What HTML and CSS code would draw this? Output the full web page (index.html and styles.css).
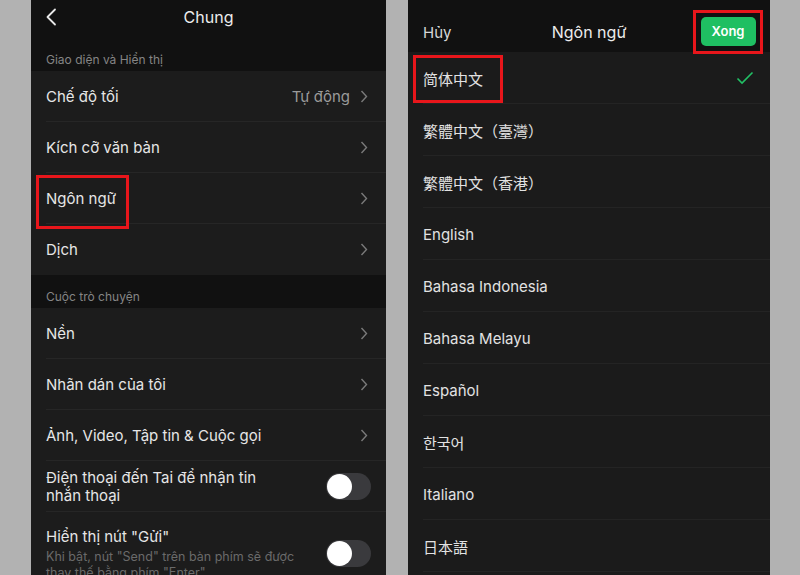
FILE: index.html
```html
<!DOCTYPE html>
<html lang="vi">
<head>
<meta charset="utf-8">
<link rel="stylesheet" href="styles.css">
</head>
<body>
<div class="stage">
  <section class="phone left">
    <header class="nav">
      <svg class="back" width="12" height="18" viewBox="0 0 12 18"><polyline points="10,1.5 2.5,9 10,16.5" fill="none" stroke="#e8e8e8" stroke-width="1.8" stroke-linecap="round" stroke-linejoin="round"/></svg>
      <span class="nav-title">Chung</span>
    </header>
    <div class="group-label first">Giao diện và Hiển thị</div>
    <div class="group">
      <div class="row"><span class="label">Chế độ tối</span><span class="value">Tự động</span><svg class="chev" width="8" height="13" viewBox="0 0 8 13"><polyline points="1.5,1 6.5,6.5 1.5,12" fill="none" stroke="#7a7a7a" stroke-width="1.4"/></svg></div>
      <div class="row"><span class="label">Kích cỡ văn bản</span><svg class="chev" width="8" height="13" viewBox="0 0 8 13"><polyline points="1.5,1 6.5,6.5 1.5,12" fill="none" stroke="#7a7a7a" stroke-width="1.4"/></svg></div>
      <div class="row"><span class="label"><span class="boxed-left">Ngôn ngữ</span></span><svg class="chev" width="8" height="13" viewBox="0 0 8 13"><polyline points="1.5,1 6.5,6.5 1.5,12" fill="none" stroke="#7a7a7a" stroke-width="1.4"/></svg></div>
      <div class="row last"><span class="label">Dịch</span><svg class="chev" width="8" height="13" viewBox="0 0 8 13"><polyline points="1.5,1 6.5,6.5 1.5,12" fill="none" stroke="#7a7a7a" stroke-width="1.4"/></svg></div>
    </div>
    <div class="group-label">Cuộc trò chuyện</div>
    <div class="group">
      <div class="row"><span class="label">Nền</span><svg class="chev" width="8" height="13" viewBox="0 0 8 13"><polyline points="1.5,1 6.5,6.5 1.5,12" fill="none" stroke="#7a7a7a" stroke-width="1.4"/></svg></div>
      <div class="row"><span class="label">Nhãn dán của tôi</span><svg class="chev" width="8" height="13" viewBox="0 0 8 13"><polyline points="1.5,1 6.5,6.5 1.5,12" fill="none" stroke="#7a7a7a" stroke-width="1.4"/></svg></div>
      <div class="row"><span class="label">Ảnh, Video, Tập tin &amp; Cuộc gọi</span><svg class="chev" width="8" height="13" viewBox="0 0 8 13"><polyline points="1.5,1 6.5,6.5 1.5,12" fill="none" stroke="#7a7a7a" stroke-width="1.4"/></svg></div>
      <div class="row"><span class="label multi">Điện thoại đến Tai để nhận tin<br>nhắn thoại</span><span class="toggle"><span class="knob"></span></span></div>
      <div class="row tall2"><div class="label-block"><div class="label">Hiển thị nút "Gửi"</div><div class="sub">Khi bật, nút "Send" trên bàn phím sẽ được<br>thay thế bằng phím "Enter"</div></div><span class="toggle"><span class="knob"></span></span></div>
    </div>
  </section>

  <section class="phone right">
    <header class="nav2">
      <span class="cancel">Hủy</span>
      <span class="nav-title">Ngôn ngữ</span>
      <span class="done-wrap"><span class="done">Xong</span></span>
    </header>
    <div class="list">
      <div class="lrow"><span class="sel"><span class="boxed-right">简体中文</span></span><svg class="check" width="18" height="14" viewBox="0 0 18 14"><polyline points="1.5,7.5 6,12 16.5,1.5" fill="none" stroke="#22c065" stroke-width="1.6"/></svg></div>
      <div class="lrow">繁體中文（臺灣）</div>
      <div class="lrow">繁體中文（香港）</div>
      <div class="lrow">English</div>
      <div class="lrow">Bahasa Indonesia</div>
      <div class="lrow">Bahasa Melayu</div>
      <div class="lrow">Español</div>
      <div class="lrow">한국어</div>
      <div class="lrow">Italiano</div>
      <div class="lrow">日本語</div>
    </div>
  </section>
</div>
</body>
</html>
```
FILE: styles.css
```css
* { box-sizing: border-box; }
html, body { margin: 0; padding: 0; }
body {
  background: #b2b2b2;
  font-family: Inter, "Noto Sans CJK SC", "Noto Sans CJK KR", sans-serif;
  color: #e4e4e4;
  width: 800px;
  height: 575px;
  overflow: hidden;
}
.stage {
  display: flex;
  gap: 22px;
  padding-left: 31px;
  height: 575px;
}
.phone {
  height: 575px;
  overflow: hidden;
  background: #111111;
  flex: none;
}
.left { width: 355px; }
.right { width: 362px; background: #1b1b1b; }

.nav {
  height: 40px;
  display: flex;
  align-items: center;
  justify-content: center;
  position: relative;
}
.back { position: absolute; left: 14px; top: 8px; }
.nav-title { font-size: 16px; color: #ececec; }
.left .nav-title { margin-top: -6px; }

.group-label {
  font-size: 12px;
  color: #858585;
  padding: 14px 15px 4px;
  height: 33px;
  display: flex;
  align-items: flex-end;
}
.group-label.first { height: 31px; padding-top: 0; }
.group { background: #1c1c1c; }
.row {
  height: 51px;
  display: flex;
  align-items: center;
  margin-left: 15px;
  padding-right: 18px;
  border-bottom: 1px solid #262626;
}
.row.last { border-bottom: none; }
.label { font-size: 15px; color: #e6e6e6; flex: 1; }
.value { font-size: 15px; color: #9a9a9a; margin-right: 10px; }
.chev { flex: none; }
.label.multi { line-height: 18px; margin-top: 2px; }
.row.tall2 { height: 70px; align-items: flex-start; padding-top: 16px; border-bottom: none; }
.label-block { flex: 1; }
.label-block .label { line-height: 18px; }
.sub { font-size: 12.5px; color: #6a6a6a; line-height: 16px; margin-top: 3px; }
.toggle {
  width: 45px;
  height: 27px;
  border-radius: 14px;
  background: #3a3a3d;
  position: relative;
  flex: none;
  margin-right: -3px;
}
.row.tall2 .toggle { margin-top: 12px; }
.knob {
  position: absolute;
  left: 1px;
  top: 1px;
  width: 25px;
  height: 25px;
  border-radius: 50%;
  background: #ffffff;
}
.boxed-left { position: relative; }
.boxed-left::after {
  content: "";
  position: absolute;
  left: -10px;
  top: -14px;
  width: 87px;
  height: 48px;
  border: 3px solid #e8161b;
}

.nav2 {
  height: 52px;
  display: grid;
  grid-template-columns: 1fr auto 1fr;
  align-items: center;
  padding: 10px 15px 0 15px;
  background: #111111;
}
.cancel { font-size: 15px; color: #d8d8d8; }
.done-wrap {
  justify-self: end;
  margin-right: -8px;
  border: 3px solid #e8161b;
  width: 70px;
  height: 44px;
  display: flex;
  align-items: center;
  justify-content: center;
}
.done {
  background: #1fbf62;
  color: #ffffff;
  font-weight: 600;
  font-size: 13px;
  width: 55px;
  height: 29px;
  border-radius: 5px;
  display: flex;
  align-items: center;
  justify-content: center;
  margin-bottom: 2px;
}
.list { background: #1b1b1b; }
.lrow {
  height: 52px;
  margin-left: 15px;
  border-bottom: 1px solid #242424;
  display: flex;
  align-items: center;
  font-size: 15px;
  color: #e2e2e2;
  padding-right: 16px;
  padding-top: 2px;
}
.sel { flex: 1; }
.boxed-right { position: relative; }
.boxed-right::before {
  content: "";
  position: absolute;
  left: -10px;
  top: -15px;
  width: 84px;
  height: 42px;
  border: 3px solid #e8161b;
}
.check { flex: none; margin-top: -2px; }
```
